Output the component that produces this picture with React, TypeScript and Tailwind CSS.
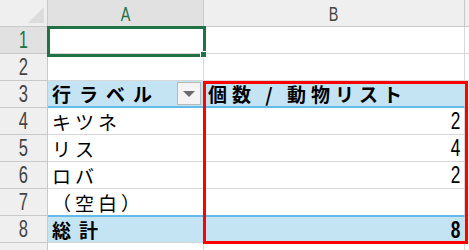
import React from "react";

type Row = {
  n: number;
  label?: string;
  value?: string;
  kind?: "head" | "total";
};

const rows: Row[] = [
  { n: 1 },
  { n: 2 },
  { n: 3, label: "行ラベル", value: "個数 / 動物リスト", kind: "head" },
  { n: 4, label: "キツネ", value: "2" },
  { n: 5, label: "リス", value: "4" },
  { n: 6, label: "ロバ", value: "2" },
  { n: 7, label: "（空白）" },
  { n: 8, label: "総計", value: "8", kind: "total" },
  { n: 9 },
];

const jp = "font-['Noto_Sans_CJK_JP','Noto_Sans',sans-serif]";
const num = "font-['Liberation_Sans',sans-serif]";

// narrow, tall digits like the sheet's grid font
const Digit = ({ children, bold }: { children: React.ReactNode; bold?: boolean }) => (
  <span className={`inline-block scale-x-[0.72] ${num} ${bold ? "font-bold" : ""}`}>{children}</span>
);

export default function App() {
  return (
    <div className="relative w-[469px] h-[250px] overflow-hidden bg-white">
      <div className="grid grid-cols-[48px_156px_261px_1fr] auto-rows-[27px]">
        {/* column headers */}
        <div className="relative bg-[#efefef] border-r border-b border-[#c8c8c8]">
          <div className="absolute right-[3px] bottom-[3px] w-0 h-0 border-l-[16px] border-l-transparent border-b-[16px] border-b-[#dcdcdc]" />
        </div>
        <div className="flex items-end justify-center bg-[#e1e1e1] border-r border-b border-[#c8c8c8] text-[#217346] text-[20px] leading-[24px]">
          <Digit>A</Digit>
        </div>
        <div className="flex items-end justify-center bg-[#efefef] border-r border-b border-[#c8c8c8] text-[#444] text-[20px] leading-[24px]">
          <Digit>B</Digit>
        </div>
        <div className="bg-[#efefef] border-b border-[#c8c8c8]" />

        {rows.map((r) => {
          const head = r.kind === "head";
          const total = r.kind === "total";
          const fill = head || total ? "bg-[#c4e4f4]" : "bg-white";
          const line = head
            ? "border-b-2 border-b-[#62bbe8]"
            : total
              ? "border-t border-t-[#62bbe8] border-b border-b-[#d4d4d4]"
              : r.n === 7
                ? "border-b border-b-[#62bbe8]"
                : "border-b border-b-[#d8d8d8]";
          return (
            <React.Fragment key={r.n}>
              <div
                className={`flex items-center justify-center border-r border-b border-[#c8c8c8] text-[23px] leading-none ${
                  r.n === 1 ? "bg-[#e1e1e1] text-[#217346]" : "bg-[#efefef] text-[#444]"
                }`}
              >
                {r.n < 9 && <Digit>{r.n}</Digit>}
              </div>
              <div
                className={`relative flex items-center pl-[4px] border-r border-r-[#d8d8d8] ${line} ${fill} ${jp} text-[19px] leading-none text-black ${
                  head || total ? "font-bold tracking-[8px]" : "tracking-[4px]"
                }`}
              >
                {r.label}
                {head && (
                  <div className="absolute right-[2px] top-[1px] w-[24px] h-[23px] flex items-center justify-center bg-[#f4f4f4] border border-[#b8b8b8]">
                    <div className="w-0 h-0 border-l-[6px] border-r-[6px] border-t-[6px] border-l-transparent border-r-transparent border-t-[#6b6b6b]" />
                  </div>
                )}
              </div>
              <div
                className={`flex items-center border-r border-r-[#d8d8d8] ${line} ${fill} text-black leading-none ${
                  head
                    ? `justify-start pl-[4px] font-bold tracking-[5px] text-[19px] ${jp}`
                    : "justify-end pr-[2px] text-[24px]"
                }`}
              >
                {head ? r.value : r.value && <Digit bold={total}>{r.value}</Digit>}
              </div>
              <div className="border-b border-b-[#d8d8d8]" />
            </React.Fragment>
          );
        })}
      </div>

      {/* active cell A1 */}
      <div className="absolute left-[47px] top-[26px] w-[159px] h-[31px] border-[3px] border-[#217346]">
        <div className="absolute -right-[4px] -bottom-[4px] w-[7px] h-[7px] bg-[#217346] border border-white" />
      </div>

      {/* value area outline */}
      <div className="absolute left-[203px] top-[81px] w-[265px] h-[163px] border-[3px] border-[#ff0000]" />
    </div>
  );
}
